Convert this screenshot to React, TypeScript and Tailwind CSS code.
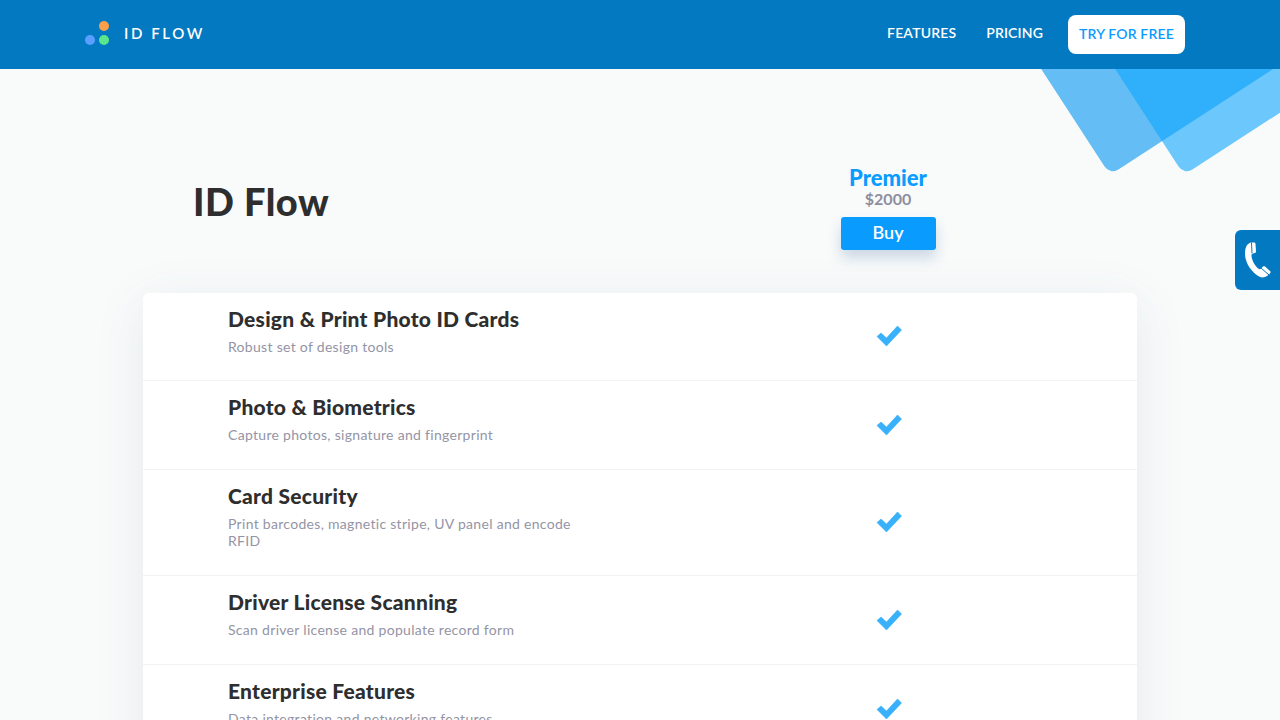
const rows = [
  { title: 'Design & Print Photo ID Cards', text: 'Robust set of design tools', height: 'h-[88px]' },
  { title: 'Photo & Biometrics', text: 'Capture photos, signature and fingerprint', height: 'h-[89px]' },
  { title: 'Card Security', text: 'Print barcodes, magnetic stripe, UV panel and encode RFID', height: 'h-[106px]' },
  { title: 'Driver License Scanning', text: 'Scan driver license and populate record form', height: 'h-[89px]' },
  { title: 'Enterprise Features', text: 'Data integration and networking features', height: 'h-[89px]' },
];

const Check = () => (
  <svg width="26" height="22" viewBox="0 0 26 22" className="block">
    <path d="M1 11.5 L5 8 L10.5 13 L21.5 1 L25.5 5 L10.5 21 Z" fill="#38b0fa" stroke="#38b0fa" strokeWidth="0.6" strokeLinejoin="round" />
  </svg>
);

export default function App() {
  return (
    <div className="relative h-screen overflow-hidden bg-[#f9fbfb] font-['Lato','Liberation_Sans',sans-serif]">
      {/* Decoration behind the header */}
      <div className="absolute left-[1110px] top-[-125px] h-[300px] w-[300px] origin-bottom-left -rotate-[33deg] rounded-[10px] bg-[#0095f0]/60" />
      <div className="absolute left-[1184px] top-[-125px] h-[300px] w-[300px] origin-bottom-left -rotate-[33deg] rounded-[10px] bg-[#0ea5ff]/60" />

      <header className="relative flex h-[69px] items-center justify-between bg-[#0279c0] pl-[85px] pr-[95px]">
        <div className="flex items-center gap-[15px]">
          <div className="mb-[3px] flex w-[24px] flex-col">
            <div className="ml-[14px] h-[10px] w-[10px] rounded-full bg-[#ff9f4a]" />
            <div className="mt-[4px] flex gap-[4px]">
              <div className="h-[10px] w-[10px] rounded-full bg-[#5a9eff]" />
              <div className="h-[10px] w-[10px] rounded-full bg-[#5ae68a]" />
            </div>
          </div>
          <span className="mb-[2px] text-[15px] font-semibold tracking-[2.6px] text-white">ID FLOW</span>
        </div>
        <nav className="flex items-center">
          <a className="mb-[5px] text-[14px] font-semibold tracking-[0.15px] text-white">FEATURES</a>
          <a className="mb-[5px] ml-[30px] text-[14px] font-semibold tracking-[0.15px] text-white">PRICING</a>
          <a className="ml-[25px] flex h-[39px] w-[117px] items-center justify-center rounded-[8px] bg-white pb-[2px] text-[14px] font-semibold tracking-[0.15px] text-[#0a9bff]">
            TRY FOR FREE
          </a>
        </nav>
      </header>

      <div className="absolute right-0 top-[230px] flex h-[60px] w-[45px] items-center justify-center rounded-l-[6px] bg-[#0279c0]">
        <svg width="28" height="36" viewBox="0 0 28 36" className="block">
          <path
            d="M5 1.5 C2 3 1 7 1 12 C1 21 8 31 16 35 C19 36 22 35 25 32.5 C26.5 31 27 30 26.5 29.5 L21 24.5 C20.5 24 19.5 24 19 24.5 L16.5 27 C15.5 27.5 14.5 27 13.5 26 C10 22.5 7.5 17 7.5 13.5 C7.5 12.5 8 12 9 11.5 L11 11 C11.7 10.7 12 10.2 12 9.5 L11.5 2 C11.4 1 11 0.5 10 0.5 L7 0.5 C6.2 0.5 5.5 1 5 1.5 Z"
            fill="white"
          />
          <path d="M7.5 0.5 L8 11.5 M17 26 L25 33" stroke="#0279c0" strokeWidth="1" fill="none" />
        </svg>
      </div>

      <main className="relative mx-[143px]">
        <section className="grid h-[224px] grid-cols-[496px_1fr] items-center">
          <h1 className="mt-[40px] pl-[50px] text-[38px] font-black leading-none tracking-[0.5px] text-[#2e2e2e]">ID Flow</h1>
          <div className="mt-[52px] flex flex-col items-center">
            <div className="text-[22px] font-black leading-[26px] text-[#0a9bff]">Premier</div>
            <div className="text-[16px] font-bold leading-[16px] text-[#8d8d9e]">$2000</div>
            <button className="mt-[10px] h-[33px] w-[95px] rounded-[3px] bg-[#0a9bff] pb-[2px] text-[18px] font-semibold text-white shadow-[0_8px_14px_rgba(40,90,150,0.22)]">
              Buy
            </button>
          </div>
        </section>

        <section className="rounded-[6px] bg-white shadow-[0_10px_50px_rgba(60,80,100,0.1)]">
          {rows.map((row) => (
            <div
              key={row.title}
              className={`grid grid-cols-[496px_1fr] items-center border-b border-[#f0f2f3] ${row.height}`}
            >
              <div className="self-start pl-[85px] pt-[13px]">
                <h2 className="text-[21px] font-black leading-[26px] tracking-[0.25px] text-[#2e2e2e]">{row.title}</h2>
                <p className="mt-[6px] w-[355px] text-[14px] leading-[17px] tracking-[0.3px] text-[#9494a5]">{row.text}</p>
              </div>
              <div className="mb-[1px] flex justify-center pl-[1px]">
                <Check />
              </div>
            </div>
          ))}
        </section>
      </main>
    </div>
  );
}
